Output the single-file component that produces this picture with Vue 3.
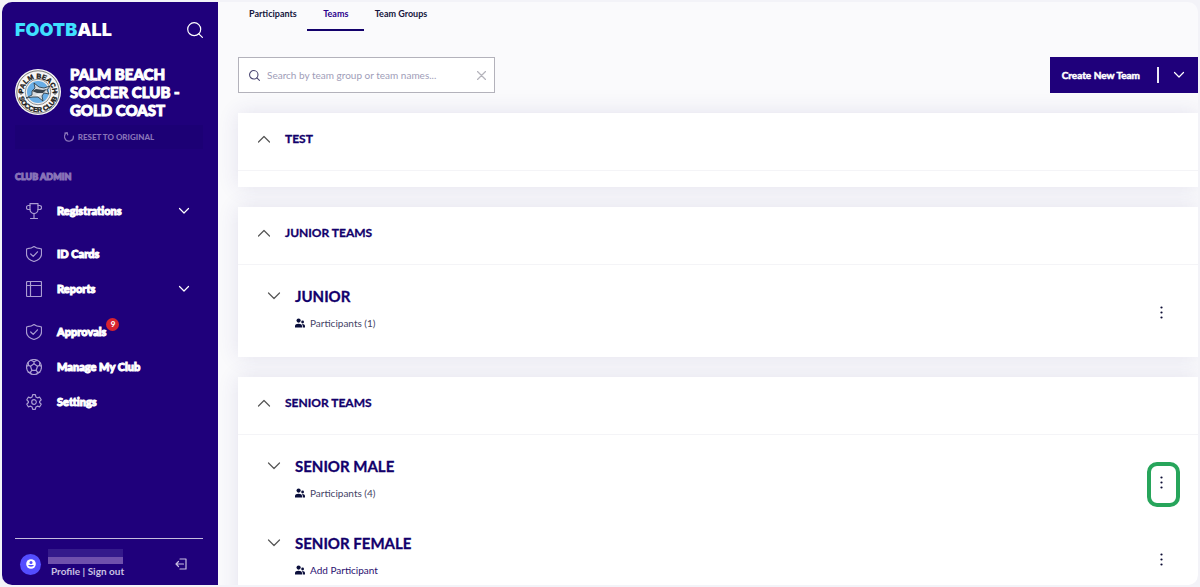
<script setup>
import { ref } from 'vue'

const tabs = ['Participants', 'Teams', 'Team Groups']
const activeTab = ref('Teams')
const search = ref('')

const nav = [
  { label: 'Registrations', icon: 'trophy', expandable: true },
  { label: 'ID Cards', icon: 'shield' },
  { label: 'Reports', icon: 'table', expandable: true },
  { label: 'Approvals', icon: 'shield', count: 9 },
  { label: 'Manage My Club', icon: 'ball' },
  { label: 'Settings', icon: 'gear' }
]

const icons = {
  trophy: ['M4 .6h8v5.900a4 4 0 0 1-8 0z', 'M4 2.500H2.300a1.800 1.800 0 0 0-1.800 1.800v.4a1.800 1.800 0 0 0 1.800 1.800H4M12 2.500h1.700a1.800 1.800 0 0 1 1.800 1.800v.4a1.800 1.800 0 0 1-1.800 1.800H12', 'M8 10.500v5M4.500 15.500h7'],
  shield: ['M8 .5C9.700 1.900 12 2.500 14.500 2.600c.6 0 1 .4 1 1V8c0 4-3.500 6.300-7.500 7.500C4 14.300.5 12 .5 8V3.600c0-.6.4-1 1-1C4 2.500 6.300 1.900 8 .5z', 'M4.700 8l2.500 2.400 4.300-4.600'],
  table: ['M1.500.5h13a1 1 0 0 1 1 1v13a1 1 0 0 1-1 1h-13a1 1 0 0 1-1-1v-13a1 1 0 0 1 1-1z', 'M.5 4.500h15M4.500.5v15'],
  ball: ['M8 .5a7.500 7.500 0 1 1 0 15 7.500 7.500 0 0 1 0-15z', 'M8 4.700l3.500 2.500-1.300 4.100H5.800L4.500 7.200z', 'M8 4.700V2.800L5 1.200M8 2.800l3-1.600M11.500 7.200l2-.8 1.800.8M13.500 6.400l.3-2.800M10.200 11.300l1.300 1.800 2.300.2M11.500 13.100l-.8 2M5.800 11.300l-1.300 1.800-2.300.2M4.500 13.100l.8 2M4.500 7.200l-2-.8-1.800.8M2.500 6.400l-.3-2.800'],
  gear: ['M6.700.6h2.600l.6 2.300 1.500.9 2.300-.6 1.500 2.600-1.600 1.700v1l1.600 1.700-1.500 2.600-2.300-.6-1.500.9-.6 2.300H6.700l-.6-2.300-1.500-.9-2.300.6L.8 10.200l1.600-1.700v-1L.8 5.800l1.500-2.600 2.300.6 1.500-.9z', 'M8 5.700a2.300 2.300 0 1 1 0 4.600 2.300 2.300 0 0 1 0-4.600z']
}

const groups = [
  { name: 'TEST', teams: [] },
  { name: 'JUNIOR TEAMS', teams: [{ name: 'JUNIOR', text: 'Participants (1)' }] },
  {
    name: 'SENIOR TEAMS',
    teams: [
      { name: 'SENIOR MALE', text: 'Participants (4)', marked: true },
      { name: 'SENIOR FEMALE', text: 'Add Participant', add: true }
    ]
  }
]
</script>

<template>
  <div class="app">
    <aside class="sidebar">
      <div class="brand">
        <span class="logo"><b>FOOTB</b>ALL</span>
        <button class="plain" aria-label="Search">
          <svg width="16" height="16" viewBox="0 0 16 16" class="line"><circle cx="7.200" cy="7.200" r="6.500" /><path d="M11.800 11.800l3.600 3.600" /></svg>
        </button>
      </div>

      <div class="club">
        <svg class="crest" width="46" height="46" viewBox="0 0 46 46" role="img" aria-label="Palm Beach Soccer Club crest">
          <defs>
            <path id="crest-top" d="M8.500 24a14.500 14.500 0 0 1 29 0" />
            <path id="crest-bottom" d="M3 23a20 20 0 0 0 40 0" />
          </defs>
          <circle cx="23" cy="23" r="23" fill="#f6f6f6" />
          <circle cx="23" cy="23" r="21.200" fill="none" stroke="#444" stroke-width=".7" />
          <circle cx="23" cy="23" r="12.800" fill="#eee" stroke="#555" stroke-width=".6" />
          <circle cx="23" cy="23" r="11" fill="#69aee6" />
          <path d="M11 29l6-3 0-4 3-3-1-5 5 4 5 1 6-2-3 4 2 4-5-1-2 3 1 5-5-4-5 0z" fill="#d5d9dc" stroke="#26323c" stroke-width=".8" />
          <path d="M17 22l4-2 7 1 4-1-4 4-6 0z" fill="#39434c" /><path d="M20 26l7-1-4 2z" fill="#fff" />
          <circle cx="6" cy="24" r="1.200" fill="none" stroke="#222" stroke-width=".8" /><circle cx="40" cy="24" r="1.200" fill="none" stroke="#222" stroke-width=".8" />
          <text class="crest-text" text-anchor="middle"><textPath href="#crest-top" startOffset="50%">PALM BEACH</textPath></text>
          <text class="crest-text" text-anchor="middle"><textPath href="#crest-bottom" startOffset="50%">SOCCER CLUB</textPath></text>
        </svg>
        <h1>PALM BEACH<br />SOCCER CLUB -<br />GOLD COAST</h1>
      </div>

      <button class="reset">
        <svg width="10" height="10" viewBox="0 0 10 10" class="line"><path d="M3 .8A4.400 4.400 0 1 0 9.300 4M.8 1.200L3.200.6l.5 2.300" /></svg>
        RESET TO ORIGINAL
      </button>

      <h2 class="section">CLUB ADMIN</h2>
      <nav>
        <a v-for="item in nav" :key="item.label" href="#" class="item" :class="{ expandable: item.expandable }">
          <svg class="line item-icon" width="16" height="16" viewBox="0 0 16 16">
            <path v-for="d in icons[item.icon]" :key="d" :d="d" />
          </svg>
          <span class="item-label">{{ item.label }}<span v-if="item.count" class="badge">{{ item.count }}</span></span>
          <svg v-if="item.expandable" class="line item-arrow" width="12" height="8" viewBox="0 0 12 8"><path d="M1.500 1.500L6 6l4.500-4.500" /></svg>
        </a>
      </nav>

      <footer class="user">
        <span class="avatar">
          <svg width="10" height="10" viewBox="0 0 10 10"><circle cx="5" cy="5" r="4.800" fill="#fff" /><circle cx="5" cy="3.400" r="1.500" fill="#544dff" /><path d="M2 6h6a3.100 2.400 0 0 1-6 0z" fill="#544dff" /></svg>
        </span>
        <div class="account">
          <span class="masked" aria-hidden="true"></span>
          <span class="links"><a href="#">Profile</a> | <a href="#">Sign out</a></span>
        </div>
        <button class="plain" aria-label="Sign out">
          <svg width="12" height="12" viewBox="0 0 12 12" class="line"><path d="M5 1h6v10H5M8.500 6H1M3.500 3.500L1 6l2.500 2.500" /></svg>
        </button>
      </footer>
    </aside>

    <main>
      <div class="tabs" role="tablist">
        <button v-for="tab in tabs" :key="tab" role="tab" class="tab" :class="{ active: tab === activeTab }" :aria-selected="tab === activeTab" @click="activeTab = tab">{{ tab }}</button>
      </div>

      <div class="toolbar">
        <div class="search">
          <svg width="11" height="11" viewBox="0 0 12 12" class="line"><circle cx="5.200" cy="5.200" r="4.600" /><path d="M8.600 8.600l2.800 2.800" /></svg>
          <input v-model="search" type="text" aria-label="Search teams" placeholder="Search by team group or team names..." />
          <button class="plain clear" aria-label="Clear search" @click="search = ''">
            <svg width="9" height="9" viewBox="0 0 9 9" class="line"><path d="M.5.5l8 8M8.500.5l-8 8" /></svg>
          </button>
        </div>
        <div class="create">
          <button class="create-main">Create New Team</button>
          <button class="create-more" aria-label="More options">
            <svg width="12" height="8" viewBox="0 0 12 8" class="line"><path d="M1.500 1.500L6 6l4.500-4.500" /></svg>
          </button>
        </div>
      </div>

      <section v-for="group in groups" :key="group.name" class="card">
        <header class="card-head">
          <button class="plain toggle" :aria-label="'Collapse ' + group.name">
            <svg width="14" height="8" viewBox="0 0 14 8" class="line"><path d="M1.500 7L7 1.500 12.500 7" /></svg>
          </button>
          <h2>{{ group.name }}</h2>
        </header>
        <div class="card-body">
          <article v-for="team in group.teams" :key="team.name" class="team">
            <button class="plain toggle" :aria-label="'Expand ' + team.name">
              <svg width="14" height="8" viewBox="0 0 14 8" class="line"><path d="M1.500 1L7 6.500 12.500 1" /></svg>
            </button>
            <div class="team-info">
              <h3>{{ team.name }}</h3>
              <a href="#" :class="{ add: team.add }">
                <svg width="10" height="10" viewBox="0 0 10 10" fill="#0b0f3c"><circle cx="3.600" cy="2.600" r="2.100" /><circle cx="7.600" cy="4" r="1.400" /><path d="M0 9.500V8c0-1.300 1.500-2.200 3.500-2.200S7 6.700 7 8v1.500zM7.700 9.500V8c0-.9-.3-1.500-.8-2 1.700-.2 3.100.6 3.100 1.900v1.600z" /></svg>
                {{ team.text }}
              </a>
            </div>
            <button class="plain more" :class="{ marked: team.marked }" :aria-label="'Options for ' + team.name">
              <svg width="3" height="13" viewBox="0 0 3 13" fill="#0b0b33"><circle cx="1.500" cy="1.500" r="1.100" /><circle cx="1.500" cy="6.500" r="1.100" /><circle cx="1.500" cy="11.500" r="1.100" /></svg>
            </button>
          </article>
        </div>
      </section>
    </main>
  </div>
</template>

<style>
html, body { margin: 0; height: 100%; background: #f3f3f8; }
#app { height: 100%; padding: 2px; box-sizing: border-box; }
</style>

<style scoped>
* { box-sizing: border-box; }
.app {
  display: flex;
  height: 100%;
  border-radius: 10px;
  overflow: hidden;
  background: #fafafc;
  font-family: Lato, "Open Sans", sans-serif;
  color: #15153c;
}
h1, h2, h3 { margin: 0; }
a { color: inherit; text-decoration: none; }
button { font-family: inherit; cursor: pointer; border: 0; }
.plain { background: none; padding: 0; display: flex; color: inherit; }
.line { fill: none; stroke: currentColor; stroke-width: 1.2; stroke-linecap: round; stroke-linejoin: round; flex: none; }

.sidebar {
  width: 216px;
  flex: none;
  display: flex;
  flex-direction: column;
  padding: 16px 15px 0 13px;
  background: #1f007b;
  color: #fff;
}
.brand { display: flex; align-items: center; justify-content: space-between; height: 24px; }
.logo { font-family: Inter, sans-serif; font-weight: 900; font-size: 18px; line-height: 24px; }
.logo b { color: #3fe0ff; font-weight: 900; }
.club { display: flex; gap: 9px; align-items: center; margin-top: 23px; }
.club h1 { font-size: 15px; line-height: 18px; font-weight: 900; white-space: nowrap; -webkit-text-stroke: 1px currentColor; }
.crest { flex: none; }
.crest-text { font-family: "Liberation Sans", sans-serif; font-weight: 700; font-size: 7px; fill: #161616; stroke: #161616; stroke-width: .3; }
.reset {
  display: flex; align-items: center; justify-content: center; gap: 4px;
  height: 24px; margin-top: 6px; padding: 0;
  background: #1c0075; color: #8873b8;
  font-size: 8px; font-weight: 900;
}
.section { margin-top: 20px; font-size: 9px; line-height: 16px; font-weight: 900; color: #8873b8; -webkit-text-stroke: 1px currentColor; }
nav { margin-top: 8px; }
.item { display: flex; align-items: center; height: 35px; padding: 0 13px 0 11px; font-size: 11px; font-weight: 900; }
.item.expandable { margin-bottom: 8px; }
.item-icon { color: #ab9dd2; margin-right: 15px; }
.item-label { position: relative; padding-bottom: 1px; -webkit-text-stroke: 1px currentColor; }
.item-arrow { margin-left: auto; }
.badge {
  position: absolute; left: 100%; top: -7px;
  width: 13px; height: 13px; border-radius: 50%;
  background: #d8232f; font-size: 8px; line-height: 13px; text-align: center;
  -webkit-text-stroke: 0;
}
.user { display: flex; align-items: center; height: 47px; margin-top: auto; padding: 4px 16px 0 5px; border-top: 1px solid #c5bddd; color: #c9c0e2; }
.avatar { width: 21px; height: 21px; border-radius: 50%; background: #544dff; display: flex; align-items: center; justify-content: center; margin-right: 7px; }
.account { display: flex; flex-direction: column; margin-right: auto; }
.masked { width: 75px; height: 15px; background: linear-gradient(#341a8b 50%, #6f50ac 50%); }
.links { font-size: 10px; line-height: 15px; padding-left: 3px; font-weight: 700; }

main { flex: 1; min-width: 0; padding-left: 20px; }
.tabs { display: flex; height: 29px; }
.tab { min-width: 57px; padding: 0 10px 4px 11px; background: none; border-bottom: 2px solid transparent; font-size: 9px; font-weight: 700; color: #15153c; }
.tab.active { border-color: #12006b; color: #2a008c; }
.toolbar { display: flex; justify-content: space-between; margin: 26px 0 20px; height: 36px; }
.search { display: flex; align-items: center; width: 257px; padding: 0 8px 0 10px; border: 1px solid #b3b2bb; background: #fff; color: #4b4772; }
.search input { flex: 1; min-width: 0; margin-left: 7px; padding: 0 0 1px; border: 0; outline: 0; background: none; font-family: inherit; font-size: 10px; color: #15153c; }
.search input::placeholder { color: #a09db8; opacity: 1; }
.clear { color: #b5b4bc; }
.create { display: flex; align-items: center; background: #1f007b; color: #fff; }
.create button { background: none; color: inherit; }
.create-main { height: 36px; padding: 0 17px 1px 12px; font-size: 10px; font-weight: 700; -webkit-text-stroke: .5px currentColor; }
.create .create-more { display: flex; align-items: center; padding: 0 13px 0 14px; height: 16px; border-left: 2px solid #ece8f5; }

.card { background: #fff; margin-bottom: 20px; box-shadow: 0 0 20px rgba(60, 50, 130, 0.12); }
.card-head { display: flex; align-items: center; height: 58px; padding: 0 20px 6px 19px; border-bottom: 1px solid #f4f4f7; }
.card-head h2 { margin-left: 14px; font-size: 12px; font-weight: 700; color: #12006b; -webkit-text-stroke: .3px currentColor; }
.toggle { color: #555; flex: none; }
.card-body { padding-top: 15px; min-height: 16px; }
.team { display: flex; height: 77px; padding: 0 18px 0 29px; align-items: flex-start; }
.team .toggle { margin-top: 12px; }
.team-info { margin-left: 14px; flex: 1; }
.team-info h3 { font-size: 15px; line-height: 32px; font-weight: 700; color: #12006b; -webkit-text-stroke: .3px currentColor; }
.team-info a { display: flex; align-items: center; gap: 5px; margin-top: 3px; font-size: 10px; line-height: 16px; color: #444466; }
.team-info a.add { color: #2a1070; }
.more { width: 33px; height: 45px; margin-top: 12px; padding: 0 5px 4px 0; align-items: center; justify-content: center; border-radius: 10px; }
.more.marked { outline: 4px solid #27a55b; outline-offset: -4px; }
</style>
